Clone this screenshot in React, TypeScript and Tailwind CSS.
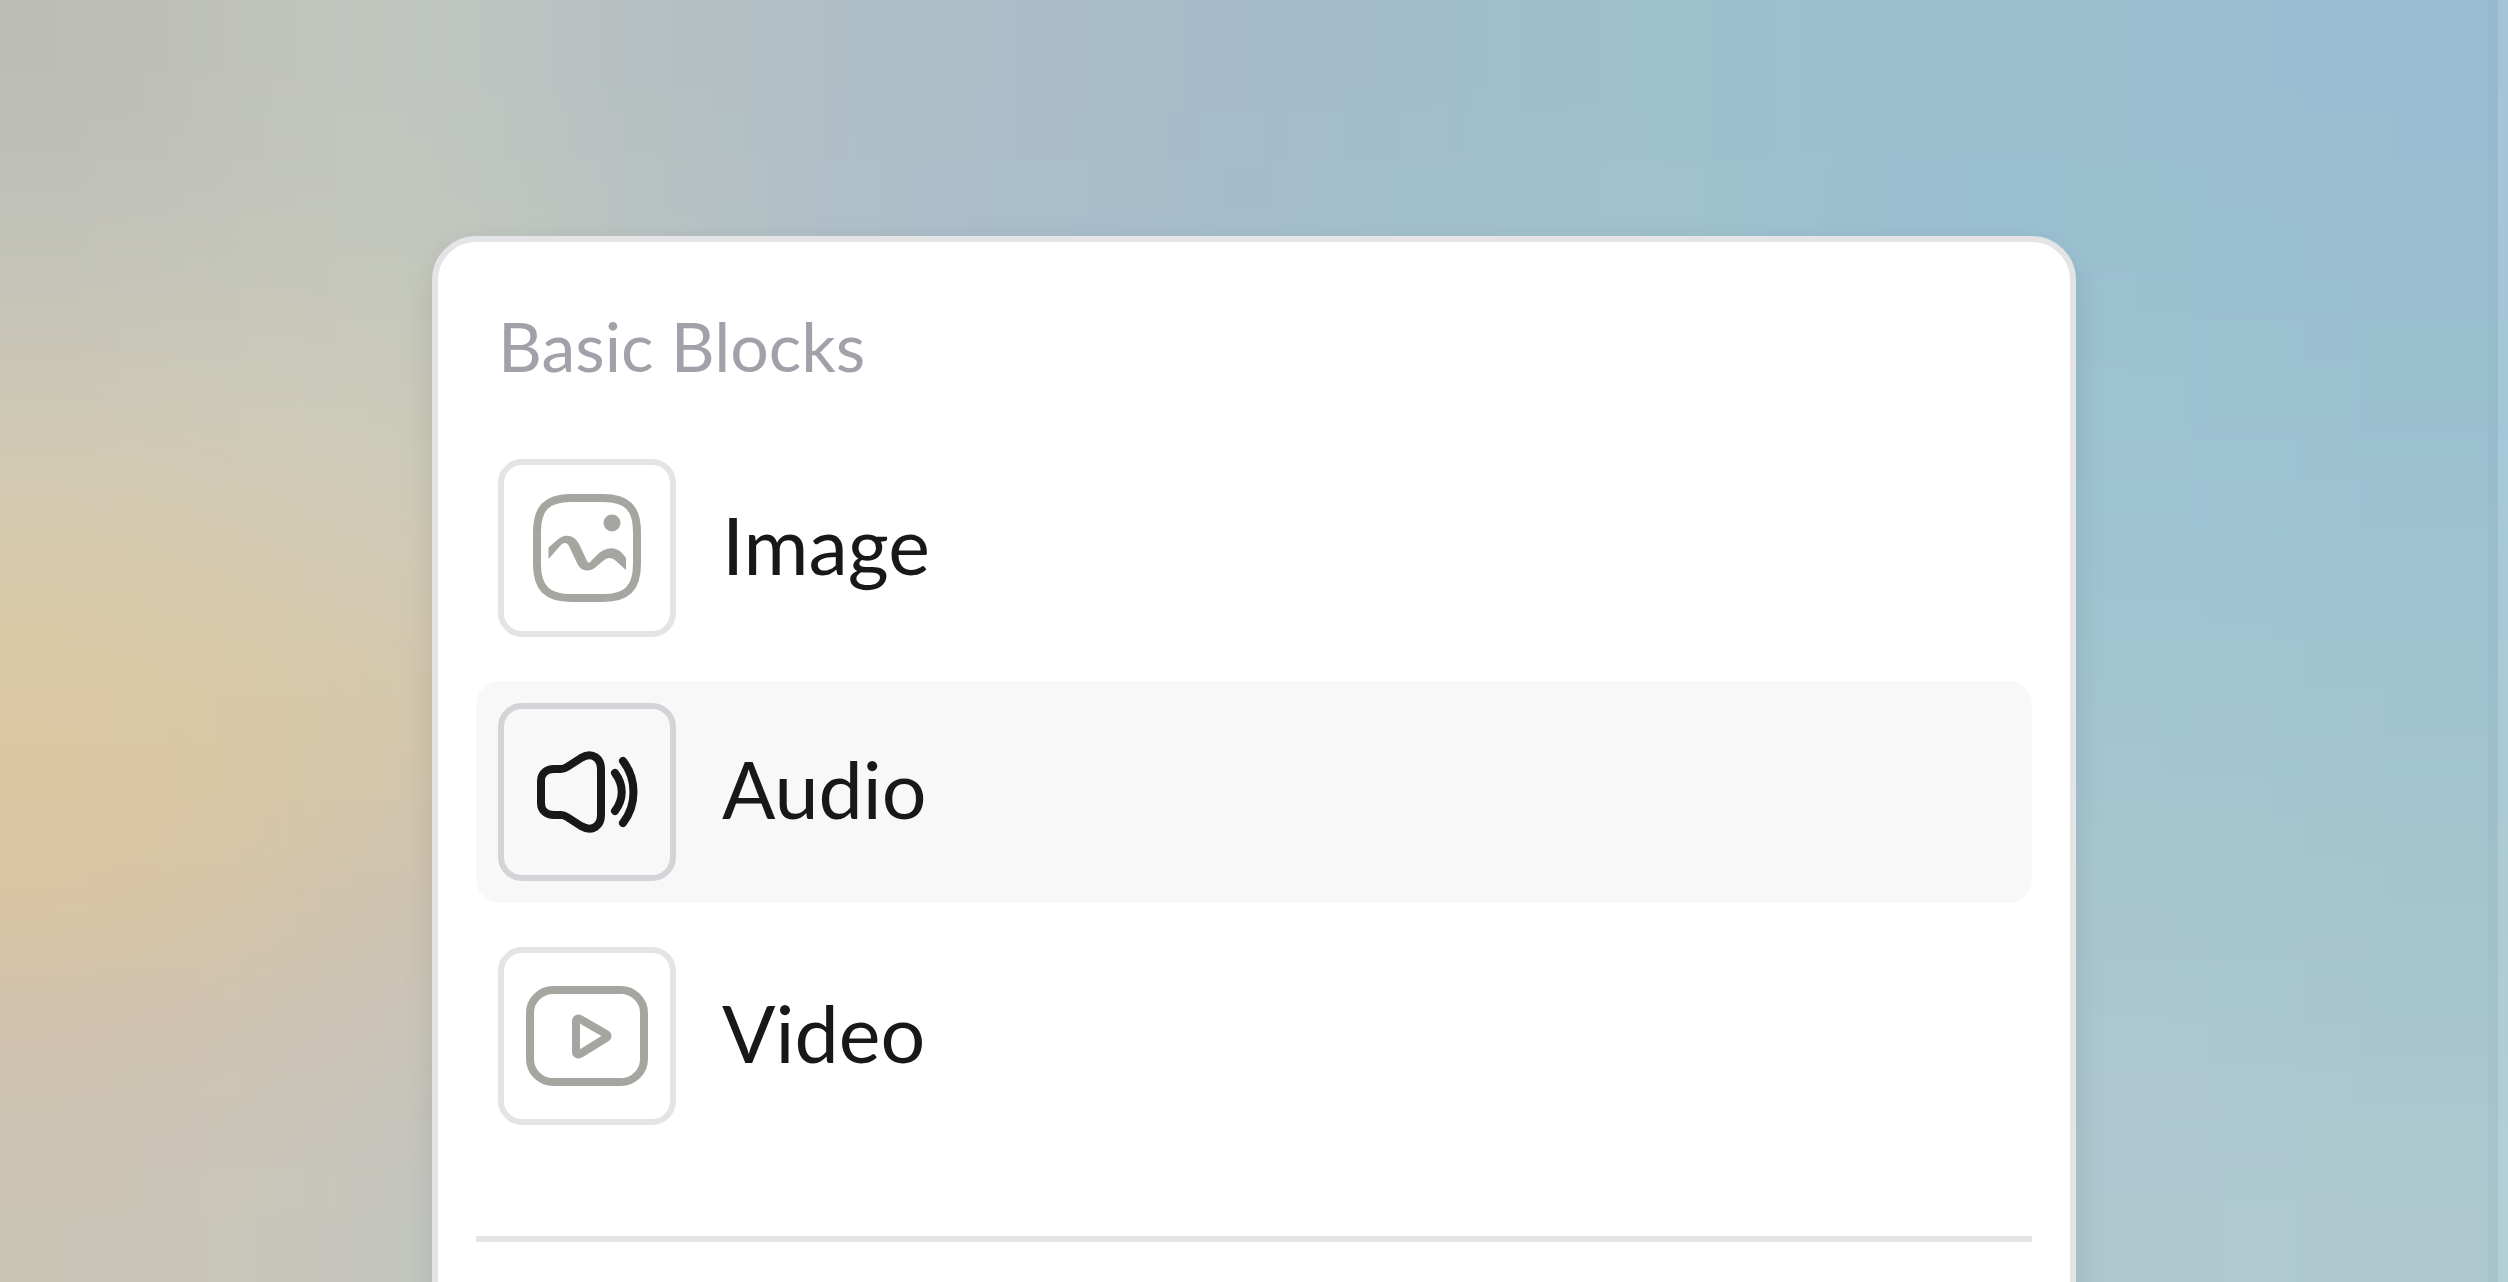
import type { ReactNode } from "react";

type Block = {
  name: string;
  icon: ReactNode;
  active?: boolean;
};

// Rows of the wallpaper, top to bottom, spread evenly over the window
const wallpaper = [
  ["#bcbdb7", "#c2c7bf", "#b7bfc1", "#adbec6", "#a9bbc9", "#a2bdcb", "#9fc0cc", "#9dbfd0", "#9bbfd0", "#9cbcd1"],
  ["#c1c2b9", "#c6c8bd", "#b9c3c1", "#adbeca", "#a7bccb", "#a2c0cc", "#a1c1cc", "#9cc0d1", "#9ac0d0", "#9bbfd1"],
  ["#cdc8b5", "#cbcbba", "#c2c6bb", "#adbdc8", "#a8bccb", "#a3c0cb", "#a0c0cb", "#9bc0d1", "#9dc2d2", "#9bc0d0"],
  ["#d7caac", "#d3cab4", "#cccab8", "#adbdc8", "#a8bccb", "#a3c0cb", "#a0c0cb", "#9fc3d0", "#9fc3d3", "#9fc2d2"],
  ["#dcc7a1", "#d5c7a8", "#cec7b5", "#adbdc8", "#a8bccb", "#a3c0cb", "#a0c0cb", "#a3c4ce", "#a4c5d0", "#a1c3cf"],
  ["#dac4a2", "#d0c4ae", "#c8c5ba", "#adbdc8", "#a8bccb", "#a3c0cb", "#a0c0cb", "#a8c6d0", "#a8c6cf", "#a5c5ce"],
  ["#d0c3b0", "#cac4b8", "#c2c6c1", "#adbdc8", "#a8bccb", "#a3c0cb", "#a0c0cb", "#acc6d1", "#abc7d0", "#a9c6cf"],
  ["#cbc5b6", "#c6c6bf", "#b9c4c8", "#adbdc8", "#a8bccb", "#a3c0cb", "#a0c0cb", "#aec6d0", "#aec8d0", "#adc9cf"],
];

function Wallpaper() {
  return (
    <svg
      className="absolute inset-0 h-full w-full"
      viewBox="0 0 10 8"
      preserveAspectRatio="none"
      aria-hidden="true"
    >
      <filter
        id="soften"
        x="-20%"
        y="-20%"
        width="140%"
        height="140%"
        colorInterpolationFilters="sRGB"
      >
        <feGaussianBlur stdDeviation="0.45" />
      </filter>
      <g filter="url(#soften)">
        {/* Edge cells run past the window so the blur stays opaque */}
        {wallpaper.map((row, y) =>
          row.map((color, x) => {
            const left = x === 0 ? -2 : x;
            const top = y === 0 ? -2 : y;
            const right = x === row.length - 1 ? x + 3 : x + 1.02;
            const bottom = y === wallpaper.length - 1 ? y + 3 : y + 1.02;
            return (
              <rect
                key={`${x}-${y}`}
                x={left}
                y={top}
                width={right - left}
                height={bottom - top}
                fill={color}
              />
            );
          }),
        )}
      </g>
      {/* Dark then light edge on the right */}
      <rect x="9.92" y="0" width="0.04" height="8" fill="#7890a8" opacity="0.08" />
      <rect x="9.96" y="0" width="0.04" height="8" fill="#d0e4f4" opacity="0.2" />
    </svg>
  );
}

function ImageIcon() {
  return (
    <svg className="size-full" viewBox="1 1 166 166" fill="none" aria-hidden="true">
      <path
        d="M68 34H100C124 34 134 44 134 68V100C134 124 124 134 100 134H68C44 134 34 124 34 100V68C34 44 44 34 68 34Z"
        stroke="currentColor"
        strokeWidth="8"
      />
      <circle cx="109" cy="59" r="8.5" fill="currentColor" />
      <path
        d="M45.5 83.5L53 77C61 69 71 70 76 80L84 97C85 99 87 99 88 97L94 91C102 83 112 82 119 89L123 94V106L113 97C109 93 104 93 100 97L94 102C87 109 78 108 74 99L66 82C64 78 60 78 57 82L45.5 95Z"
        fill="currentColor"
      />
    </svg>
  );
}

function AudioIcon() {
  return (
    <svg
      className="size-full"
      viewBox="1 1 166 166"
      fill="none"
      stroke="currentColor"
      strokeWidth="8"
      strokeLinecap="round"
      strokeLinejoin="round"
      aria-hidden="true"
    >
      <path d="M38 73C38 65 44 61 51 61H58Q61 61 64 59L78 50C90 43 98 51 98 61V107C98 117 90 125 78 118L64 109Q61 107 58 107H51C44 107 38 103 38 95Z" />
      <path d="M112 65C121 77 121 91 112 103" />
      <path d="M120 53C134 71 134 97 120 115" />
    </svg>
  );
}

function VideoIcon() {
  return (
    <svg
      className="size-full"
      viewBox="1 1 166 166"
      fill="none"
      stroke="currentColor"
      strokeWidth="8"
      strokeLinejoin="round"
      aria-hidden="true"
    >
      <rect x="27" y="38" width="114" height="92" rx="23" />
      <path d="M73 69C73 67 75 66 77 67L103 82C105 83 105 85 103 86L77 102C75 103 73 102 73 100Z" />
    </svg>
  );
}

const blocks: Block[] = [
  { name: "Image", icon: <ImageIcon /> },
  { name: "Audio", icon: <AudioIcon />, active: true },
  { name: "Video", icon: <VideoIcon /> },
];

function BlockItem({ name, icon, active }: Block) {
  return (
    <li>
      <button
        type="button"
        className={`flex w-full items-center gap-[46px] rounded-3xl p-[22px] text-left ${
          active ? "bg-[#f8f8f8]" : "bg-white"
        }`}
      >
        <span
          className={`size-[178px] shrink-0 rounded-3xl border-[6px] ${
            active
              ? "border-[#d4d4d8] text-[#18181b]"
              : "border-[#e4e4e7] text-[#a5a6a0]"
          }`}
        >
          {icon}
        </span>
        <span className="pb-1.5 text-[79px] leading-[96px] text-[#18181b]">
          {name}
        </span>
      </button>
    </li>
  );
}

export default function App() {
  return (
    <main className="relative flex h-screen justify-center overflow-hidden bg-[#a8bccb] px-8 pt-[236px] font-['Lato',sans-serif]">
      <Wallpaper />

      {/* The menu continues below the fold */}
      <section className="relative h-screen w-full max-w-[1644px] shrink-0 rounded-t-[44px] border-[6px] border-[#e4e4e7] bg-white px-[38px] pt-14 shadow-[0_12px_32px_rgba(0,0,0,0.1)]">
        <h2 className="px-[22px] text-[68px] leading-[96px] text-[#a1a1aa]">
          Basic Blocks
        </h2>
        <ul className="mt-[43px] flex flex-col gap-[22px]">
          {blocks.map((block) => (
            <BlockItem key={block.name} {...block} />
          ))}
        </ul>
        <hr className="mt-[89px] border-t-[6px] border-[#e4e4e7]" />
      </section>
    </main>
  );
}
